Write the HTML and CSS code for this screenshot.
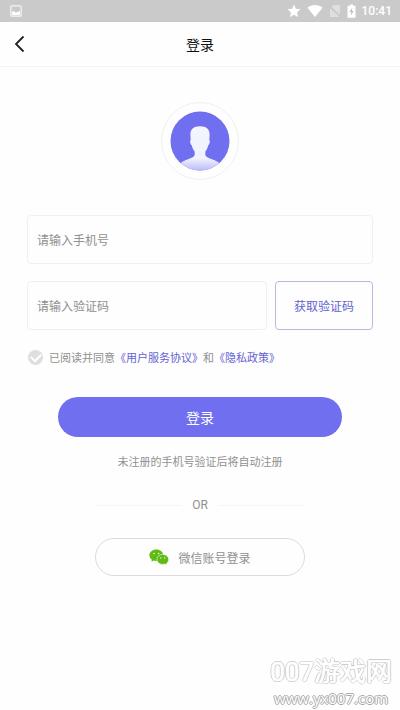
FILE: index.html
```html
<!DOCTYPE html>
<html lang="zh-CN">
<head>
<meta charset="utf-8">
<meta name="viewport" content="width=device-width, initial-scale=1">
<title>登录</title>
<link rel="stylesheet" href="styles.css">
</head>
<body>
<div class="status">
  <svg width="12" height="12" viewBox="0 0 12 12" aria-hidden="true"><rect x=".8" y=".8" width="10.4" height="10.4" rx="1" fill="none" stroke="#f4f4f4" stroke-width="1.2"/><path d="M2 10V6.800L3.500 6l2 1.500L8 7l2-1v4z" fill="#fff"/></svg>
  <div class="status-right">
    <svg width="14" height="14" viewBox="0 0 14 14" aria-hidden="true"><path d="M7 .6l1.9 4.2 4.6.5L10 8.4l1 4.7-4-2.4-4 2.4 1-4.7L.5 5.3l4.600-.5z" fill="#fff"/></svg>
    <svg width="16" height="14" viewBox="0 0 16 14" aria-hidden="true"><path d="M.4 3.700C4.500.1 11.500.1 15.600 3.700L8 13z" fill="#fff"/></svg>
    <svg width="12" height="14" viewBox="0 0 12 14" aria-hidden="true"><path d="M4.500 1H11v12H1V4.500z" fill="#dedede"/><path d="M0 2l12 11" stroke="#c6c6c6" stroke-width="1.500"/></svg>
    <svg width="9" height="14" viewBox="0 0 9 14" aria-hidden="true"><path d="M3 .5h3v1.200h2.500v12h-8v-12H3z" fill="#fff"/><path d="M5.300 3.800L2.300 8h2L3.700 11.500 6.800 7h-2z" fill="#bdbdbd"/></svg>
    <span class="time">10:41</span>
  </div>
</div>
<header class="header">
  <button class="back" type="button" aria-label="返回">
    <svg width="12" height="18" viewBox="0 0 12 18" aria-hidden="true"><path d="M9.500 1.500L2 9l7.500 7.500" fill="none" stroke="#222" stroke-width="1.800"/></svg>
  </button>
  <h1 class="title">登录</h1>
</header>
<main class="main">
  <div class="avatar">
    <svg width="60" height="60" viewBox="0 0 60 60" aria-hidden="true">
      <defs>
        <linearGradient id="body" x1="0" y1="0" x2="0" y2="1"><stop offset="0" stop-color="#f4f6fd"/><stop offset=".72" stop-color="#f0f2fd"/><stop offset="1" stop-color="#b9b8f7"/></linearGradient>
        <clipPath id="disc"><circle cx="30" cy="30" r="29.500"/></clipPath>
      </defs>
      <circle cx="30" cy="30" r="29.500" fill="#706ff0"/>
      <path clip-path="url(#disc)" d="M30 15.200C36.500 15.200 39.800 18.500 39.600 24L39.300 29C40.300 29.600 39.700 33.800 38.200 34.300C37.700 37.200 36.600 38.800 35.300 40.500V43.500C35.300 46 38.500 47 42 48.300C45.500 49.500 49 51.500 51.500 54V60H8.500V54C11 51.500 14.500 49.500 18 48.300C21.500 47 24.700 46 24.700 43.500V40.500C23.400 38.800 22.300 37.200 21.800 34.300C20.300 33.800 19.700 29.600 20.700 29L20.400 24C20.200 18.500 23.500 15.200 30 15.200z" fill="url(#body)"/>
    </svg>
  </div>
  <form class="form">
    <input class="field" type="tel" placeholder="请输入手机号" aria-label="手机号">
    <div class="code-row">
      <input class="field" type="text" placeholder="请输入验证码" aria-label="验证码">
      <button class="get-code" type="button">获取验证码</button>
    </div>
    <div class="agree">
      <input class="check" type="checkbox" id="agree">
      <label for="agree">已阅读并同意</label><a href="#terms">《用户服务协议》</a><span>和</span><a href="#privacy">《隐私政策》</a>
    </div>
    <button class="login" type="button">登录</button>
  </form>
  <p class="note">未注册的手机号验证后将自动注册</p>
  <div class="or">OR</div>
  <button class="wechat" type="button">
    <svg width="20" height="17" viewBox="0 0 20 17" aria-hidden="true">
      <path d="M7.300.5C3.400.5.400 3 .400 6.200c0 1.800 1 3.400 2.500 4.500l-.6 2.100 2.400-1.200c.8.200 1.700.4 2.600.4 3.900 0 6.900-2.600 6.900-5.800S11.200.5 7.300.5z" fill="#5dbb14"/>
      <path d="M13.800 5.400c-3.300 0-5.900 2.200-5.900 5s2.600 5 5.900 5c.8 0 1.500-.1 2.200-.3l2 1.100-.5-1.800c1.300-.9 2.200-2.400 2.200-4 0-2.800-2.600-5-5.900-5z" fill="#5dbb14" stroke="#fff" stroke-width=".6"/>
      <g fill="#fff"><circle cx="5" cy="4.500" r=".8"/><circle cx="9.600" cy="4.500" r=".8"/><circle cx="11.900" cy="8.900" r=".7"/><circle cx="15.700" cy="8.900" r=".7"/></g>
    </svg>
    <span>微信账号登录</span>
  </button>
</main>
<div class="mark"><span class="mark-name">007游戏网</span><span class="mark-url">www.yx007.com</span></div>
</body>
</html>
```
FILE: styles.css
```css
* {
  box-sizing: border-box;
}

body {
  margin: 0;
  min-height: 100vh;
  position: relative;
  background: #fefefe;
  color: #909090;
  font-family: Roboto, "Noto Sans CJK SC", sans-serif;
  font-size: 12px;
}

button,
input {
  margin: 0;
  font: inherit;
}

svg {
  display: block;
  flex: none;
}

a {
  color: #6462d2;
  text-decoration: none;
}

.status {
  display: flex;
  align-items: center;
  justify-content: space-between;
  height: 22px;
  padding: 0 8px 0 10px;
  background: #cacaca;
}

.status-right {
  display: flex;
  align-items: center;
  gap: 6px;
}

.time {
  color: #fff;
  font-size: 12px;
  font-weight: 500;
}

.header {
  display: grid;
  grid-template-columns: 40px 1fr 40px;
  align-items: center;
  height: 45px;
  border-bottom: 1px solid #f3f3f3;
}

.back {
  display: flex;
  justify-content: center;
  padding: 0;
  border: 0;
  background: none;
}

.title {
  margin: 0;
  color: #111;
  font-size: 14px;
  font-weight: 400;
  text-align: center;
}

.main {
  padding: 35px 27px 40px;
}

.avatar {
  display: flex;
  align-items: center;
  justify-content: center;
  width: 78px;
  height: 78px;
  margin: 0 auto 35px;
  border: 1px solid #f0f0f2;
  border-radius: 50%;
}

.field {
  display: block;
  width: 100%;
  min-width: 0;
  height: 49px;
  padding: 2px 9px 0;
  border: 1px solid #f0f0f0;
  border-radius: 4px;
  background: none;
  color: #333;
}

.field::placeholder {
  color: #909090;
  opacity: 1;
}

.code-row {
  display: flex;
  gap: 8px;
  margin: 17px 0;
}

.get-code {
  flex: none;
  width: 98px;
  border: 1px solid #b9b8dd;
  border-radius: 4px;
  background: none;
  color: #6462d2;
}

.agree {
  display: flex;
  align-items: center;
  height: 20px;
  font-size: 11px;
  white-space: nowrap;
}

.check {
  display: grid;
  place-items: center;
  width: 15px;
  height: 15px;
  margin: 0 6px 0 1px;
  border-radius: 50%;
  background: #dedede;
  appearance: none;
}

.check::after {
  content: "";
  width: 8px;
  height: 5px;
  margin-bottom: 2px;
  border: solid #fff;
  border-width: 0 0 2px 2px;
  transform: rotate(-45deg);
}

.login {
  display: block;
  width: calc(100% - 62px);
  height: 40px;
  margin: 30px auto 0;
  border: 0;
  border-radius: 20px;
  background: #706ff0;
  color: #fff;
  font-size: 14px;
}

.note {
  margin: 17px 0 0;
  font-size: 11px;
  line-height: 18px;
  text-align: center;
}

.or {
  display: flex;
  align-items: center;
  gap: 10px;
  margin: 24px 70px;
  line-height: 18px;
}

.or::before,
.or::after {
  content: "";
  flex: 1;
  height: 1px;
  background: #f5f5f5;
}

.wechat {
  display: flex;
  align-items: center;
  justify-content: center;
  gap: 9px;
  width: calc(100% - 136px);
  height: 38px;
  margin: 0 auto;
  border: 1px solid #dcdcdc;
  border-radius: 19px;
  background: none;
  color: #909090;
}

.mark {
  position: absolute;
  right: 8px;
  bottom: 2px;
  display: flex;
  flex-direction: column;
  align-items: center;
  color: #fff;
  white-space: nowrap;
  text-shadow: 1px 0 #aaa, -1px 0 #aaa, 0 1px #aaa, 0 -1px #aaa;
  pointer-events: none;
}

.mark-name {
  font-size: 26px;
  line-height: 32px;
  -webkit-text-stroke: 1px #fff;
}

.mark-url {
  font-family: "Open Sans", sans-serif;
  font-size: 15px;
  line-height: 20px;
}
```
